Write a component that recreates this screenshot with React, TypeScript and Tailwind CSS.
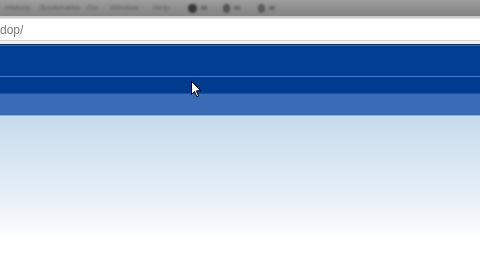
export default function App() {
  const menu = [
    { label: "History", w: "w-[25px]" },
    { label: "Bookmarks", w: "w-[37px]" },
    { label: "Go", w: "w-[13px]" },
    { label: "Window", w: "w-[33px]" },
    { label: "Help", w: "w-[20px]" },
  ];

  return (
    <div className="relative flex h-[270px] w-[480px] flex-col overflow-hidden bg-white font-['Liberation_Sans',Arial,sans-serif]">
      {/* grey title / menu strip */}
      <div className="h-[16px] bg-gradient-to-b from-[#9e9e9e] via-[#8e8e8e] to-[#848484]">
        <div className="flex h-full items-center gap-[10px] pl-[5px] blur-[0.9px]">
          {menu.map((m) => (
            <span key={m.label} className={`${m.w} whitespace-nowrap text-[8px] leading-none text-[#606060]`}>
              {m.label}
            </span>
          ))}
          <div className="ml-[5px] flex items-center gap-[4px]">
            <span className="h-[9px] w-[9px] rounded-full bg-[#383838]" />
            <span className="h-[4px] w-[6px] bg-[#6a6a6a]" />
            <span className="ml-[12px] h-[9px] w-[7px] rounded-full bg-[#555]" />
            <span className="h-[4px] w-[6px] bg-[#6a6a6a]" />
            <span className="ml-[14px] h-[9px] w-[7px] rounded-full bg-[#5c5c5c]" />
            <span className="h-[4px] w-[6px] bg-[#6a6a6a]" />
          </div>
        </div>
      </div>

      {/* address bar */}
      <div className="h-[2px] bg-[#c8c8c8]" />
      <div className="flex h-[22px] items-center border-t border-[#e4e4e4] bg-white">
        <span className="text-[12px] text-[#7a7a7a] blur-[0.4px]">dop/</span>
      </div>
      <div className="h-[1px] bg-[#d4d4d4]" />
      <div className="h-[3px] bg-[#eef0f4]" />

      {/* dark blue header */}
      <div className="h-[1px] bg-[#0d2c6a]" />
      <div className="h-[1px] bg-[#3d6cbd]" />
      <div className="h-[30px] bg-[#033f93]" />
      <div className="h-[1px] bg-[#4a78c4]" />
      <div className="h-[16px] bg-[#013b90]" />
      <div className="h-[1px] bg-[#1f50a2]" />

      {/* lighter blue band */}
      <div className="h-[21px] bg-[#3a6bb6]" />
      <div className="h-[1px] bg-[#88aee0]" />
      <div className="h-[2px] bg-[#c6dcf3]" />

      {/* gradient content area */}
      <div className="flex-1 bg-gradient-to-b from-[#c6dded] via-[#e6eef7] via-50% to-white to-80%" />

      {/* cursor */}
      <svg
        className="absolute left-[191px] top-[81px]"
        width="11"
        height="17"
        viewBox="0 0 11 17"
      >
        <path
          d="M0.5 0.5 L0.5 13.5 L3.5 10.5 L5.8 15.8 L7.6 15 L5.4 9.8 L9.8 9.8 Z"
          fill="white"
          stroke="black"
          strokeWidth="1"
          strokeLinejoin="round"
        />
      </svg>
    </div>
  );
}
